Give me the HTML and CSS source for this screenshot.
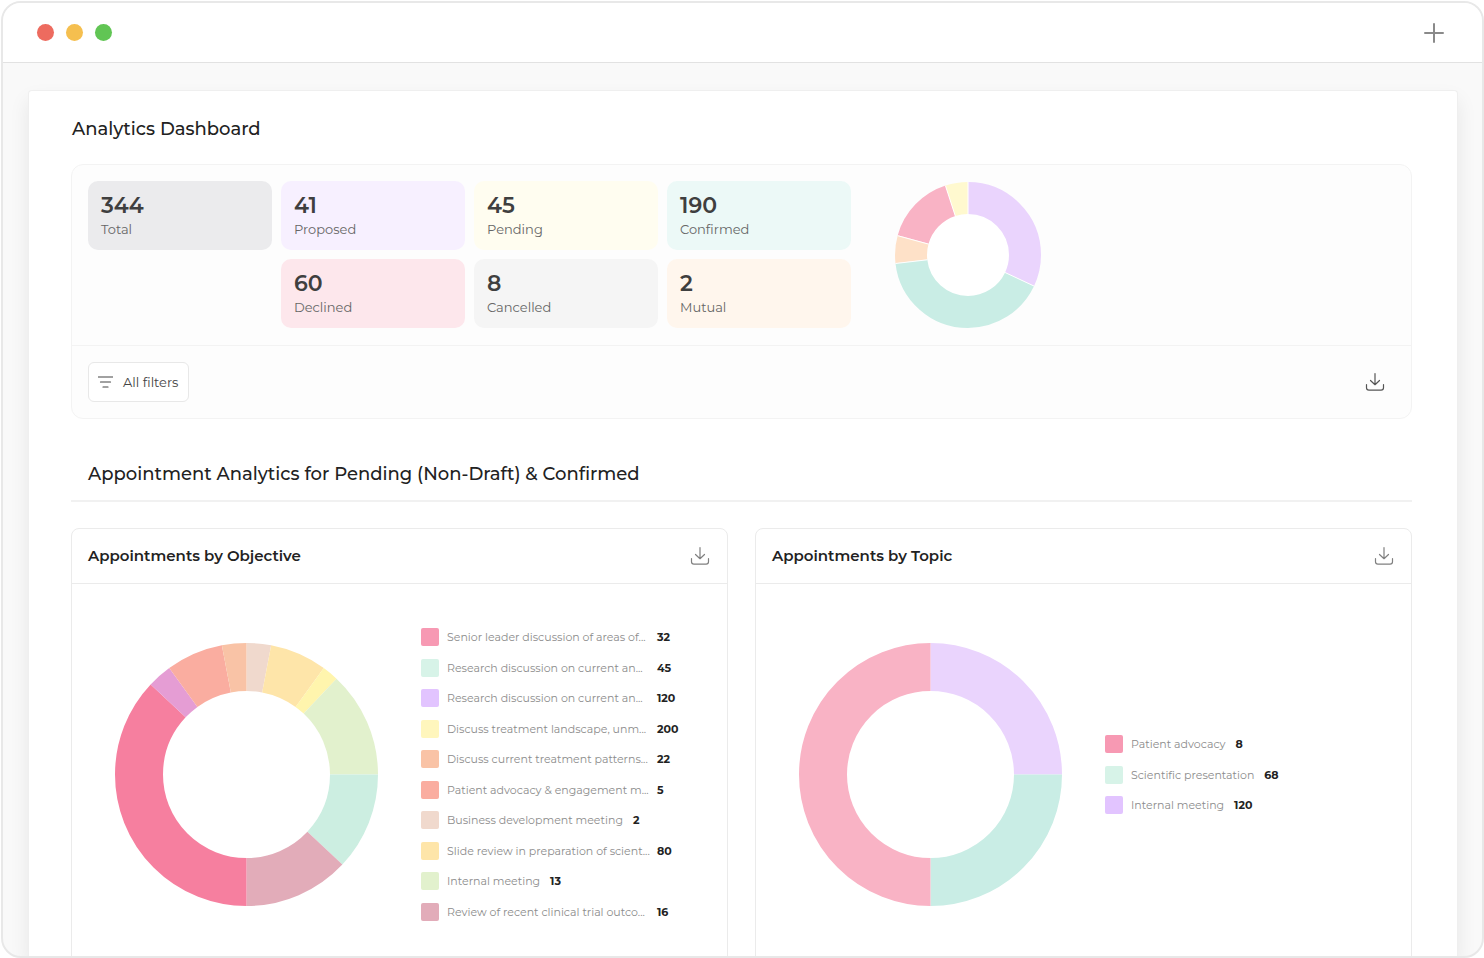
FILE: index.html
```
<!DOCTYPE html>
<html lang="en">
<head>
<meta charset="utf-8">
<meta name="viewport" content="width=device-width, initial-scale=1">
<title>Analytics Dashboard</title>
<link rel="stylesheet" href="styles.css">
</head>
<body>
<svg class="sprite" aria-hidden="true">
  <symbol id="download" viewBox="0 0 20 20">
    <path d="M10 1.500v11M5.500 8.500l4.500 4.200L14.500 8.500M1.500 12.500v3.300q0 2.400 2.400 2.400h12.200q2.400 0 2.400-2.400v-3.300" fill="none" stroke="currentColor" stroke-width="1.200" stroke-linecap="round" stroke-linejoin="round"/>
  </symbol>
</svg>
<div class="window">
  <header class="titlebar">
    <div class="lights">
      <span class="light light-red"></span>
      <span class="light light-amber"></span>
      <span class="light light-green"></span>
    </div>
    <button class="icon-button new-tab" type="button" aria-label="New tab">
      <svg width="20" height="20" viewBox="0 0 20 20"><path d="M10 1v18M1 10h18" stroke="currentColor" stroke-width="2" stroke-linecap="round"/></svg>
    </button>
  </header>
  <div class="viewport">
    <main class="panel">
      <h1 class="page-title">Analytics Dashboard</h1>

      <section class="summary">
        <div class="summary-main">
          <div class="stats">
            <div class="stat stat-total"><strong class="stat-value">344</strong><span class="stat-label">Total</span></div>
            <div class="stat stat-proposed"><strong class="stat-value">41</strong><span class="stat-label">Proposed</span></div>
            <div class="stat stat-pending"><strong class="stat-value">45</strong><span class="stat-label">Pending</span></div>
            <div class="stat stat-confirmed"><strong class="stat-value">190</strong><span class="stat-label">Confirmed</span></div>
            <div class="stat stat-declined"><strong class="stat-value">60</strong><span class="stat-label">Declined</span></div>
            <div class="stat stat-cancelled"><strong class="stat-value">8</strong><span class="stat-label">Cancelled</span></div>
            <div class="stat stat-mutual"><strong class="stat-value">2</strong><span class="stat-label">Mutual</span></div>
          </div>
          <svg class="donut-small" viewBox="0 0 146 146" role="img" aria-label="Appointments by status">
            <circle cx="73" cy="73" r="42" fill="#fff"/>
            <g fill="none" stroke-width="32" transform="rotate(-90 73 73)">
              <circle cx="73" cy="73" r="57" pathLength="100" stroke="#ead4fd" stroke-dasharray="32 100"/>
              <circle cx="73" cy="73" r="57" pathLength="100" stroke="#c9ede5" stroke-dasharray="41.200 100" stroke-dashoffset="-32"/>
              <circle cx="73" cy="73" r="57" pathLength="100" stroke="#fee1c8" stroke-dasharray="6.200 100" stroke-dashoffset="-73.200"/>
              <circle cx="73" cy="73" r="57" pathLength="100" stroke="#f9b3c5" stroke-dasharray="15.600 100" stroke-dashoffset="-79.400"/>
              <circle cx="73" cy="73" r="57" pathLength="100" stroke="#fff9cf" stroke-dasharray="5 100" stroke-dashoffset="-95"/>
            </g>
            <path d="M73 32V0M110.100 90.500L139.100 104.100M32.300 77.800L.5 81.500M33.500 62.100L2.600 53.700M60.300 34L50.400 3.600" stroke="#fff" stroke-width="1"/>
          </svg>
        </div>
        <div class="summary-tools">
          <button class="filter-button" type="button">
            <svg width="15" height="12" viewBox="0 0 15 12"><path d="M.5 1h14M2.500 6h10M5 11h5" stroke="currentColor" stroke-width="1.200" stroke-linecap="round"/></svg>
            All filters
          </button>
          <button class="icon-button" type="button" aria-label="Download summary"><svg width="20" height="20"><use href="#download"/></svg></button>
        </div>
      </section>

      <h2 class="section-title">Appointment Analytics for Pending (Non-Draft) &amp; Confirmed</h2>

      <div class="cards">
        <section class="card">
          <header class="card-header">
            <h3 class="card-title">Appointments by Objective</h3>
            <button class="icon-button icon-muted" type="button" aria-label="Download appointments by objective"><svg width="20" height="20"><use href="#download"/></svg></button>
          </header>
          <div class="card-body">
            <svg class="donut" viewBox="0 0 263 263" role="img" aria-label="Appointments by objective">
              <g fill="none" stroke-width="48" transform="rotate(-90 131.500 131.500)">
                <circle cx="131.500" cy="131.500" r="107.500" pathLength="100" stroke="#f0d9cd" stroke-dasharray="3 100"/>
                <circle cx="131.500" cy="131.500" r="107.500" pathLength="100" stroke="#fee5a9" stroke-dasharray="7 100" stroke-dashoffset="-3"/>
                <circle cx="131.500" cy="131.500" r="107.500" pathLength="100" stroke="#fff5ad" stroke-dasharray="2 100" stroke-dashoffset="-10"/>
                <circle cx="131.500" cy="131.500" r="107.500" pathLength="100" stroke="#e2f1cd" stroke-dasharray="13 100" stroke-dashoffset="-12"/>
                <circle cx="131.500" cy="131.500" r="107.500" pathLength="100" stroke="#cceee1" stroke-dasharray="12 100" stroke-dashoffset="-25"/>
                <circle cx="131.500" cy="131.500" r="107.500" pathLength="100" stroke="#e2acb9" stroke-dasharray="13 100" stroke-dashoffset="-37"/>
                <circle cx="131.500" cy="131.500" r="107.500" pathLength="100" stroke="#f67f9f" stroke-dasharray="37 100" stroke-dashoffset="-50"/>
                <circle cx="131.500" cy="131.500" r="107.500" pathLength="100" stroke="#e59dd4" stroke-dasharray="3 100" stroke-dashoffset="-87"/>
                <circle cx="131.500" cy="131.500" r="107.500" pathLength="100" stroke="#faada0" stroke-dasharray="7 100" stroke-dashoffset="-90"/>
                <circle cx="131.500" cy="131.500" r="107.500" pathLength="100" stroke="#f9c3a6" stroke-dasharray="3 100" stroke-dashoffset="-97"/>
              </g>
            </svg>
            <ul class="legend legend-long">
              <li class="legend-item"><span class="swatch rose"></span><span class="legend-name clipped">Senior leader discussion of areas of...</span><b class="legend-value">32</b></li>
              <li class="legend-item"><span class="swatch mint"></span><span class="legend-name clipped">Research discussion on current an...</span><b class="legend-value">45</b></li>
              <li class="legend-item"><span class="swatch lilac"></span><span class="legend-name clipped">Research discussion on current an...</span><b class="legend-value">120</b></li>
              <li class="legend-item"><span class="swatch lemon"></span><span class="legend-name clipped">Discuss treatment landscape, unm...</span><b class="legend-value">200</b></li>
              <li class="legend-item"><span class="swatch peach"></span><span class="legend-name clipped">Discuss current treatment patterns...</span><b class="legend-value">22</b></li>
              <li class="legend-item"><span class="swatch salmon"></span><span class="legend-name clipped">Patient advocacy &amp; engagement m...</span><b class="legend-value">5</b></li>
              <li class="legend-item"><span class="swatch sand"></span><span class="legend-name">Business development meeting</span><b class="legend-value">2</b></li>
              <li class="legend-item"><span class="swatch honey"></span><span class="legend-name clipped">Slide review in preparation of scient...</span><b class="legend-value">80</b></li>
              <li class="legend-item"><span class="swatch lime"></span><span class="legend-name">Internal meeting</span><b class="legend-value">13</b></li>
              <li class="legend-item"><span class="swatch mauve"></span><span class="legend-name clipped">Review of recent clinical trial outco...</span><b class="legend-value">16</b></li>
            </ul>
          </div>
        </section>

        <section class="card">
          <header class="card-header">
            <h3 class="card-title">Appointments by Topic</h3>
            <button class="icon-button icon-muted" type="button" aria-label="Download appointments by topic"><svg width="20" height="20"><use href="#download"/></svg></button>
          </header>
          <div class="card-body">
            <svg class="donut" viewBox="0 0 263 263" role="img" aria-label="Appointments by topic">
              <g fill="none" stroke-width="48" transform="rotate(-90 131.500 131.500)">
                <circle cx="131.500" cy="131.500" r="107.500" pathLength="100" stroke="#ead4fd" stroke-dasharray="25 100"/>
                <circle cx="131.500" cy="131.500" r="107.500" pathLength="100" stroke="#c9ede5" stroke-dasharray="25 100" stroke-dashoffset="-25"/>
                <circle cx="131.500" cy="131.500" r="107.500" pathLength="100" stroke="#f9b3c5" stroke-dasharray="50 100" stroke-dashoffset="-50"/>
              </g>
            </svg>
            <ul class="legend legend-short">
              <li class="legend-item"><span class="swatch rose"></span><span class="legend-name">Patient advocacy</span><b class="legend-value">8</b></li>
              <li class="legend-item"><span class="swatch mint"></span><span class="legend-name">Scientific presentation</span><b class="legend-value">68</b></li>
              <li class="legend-item"><span class="swatch lilac"></span><span class="legend-name">Internal meeting</span><b class="legend-value">120</b></li>
            </ul>
          </div>
        </section>
      </div>
    </main>
  </div>
</div>
</body>
</html>
```

FILE: styles.css
```
* { box-sizing: border-box; }

body {
  margin: 0;
  height: 100vh;
  padding: 1px 0 0 1px;
  overflow: hidden;
  background: #fff;
  color: #222;
  font-family: Montserrat, Inter, "Liberation Sans", sans-serif;
}

h1, h2, h3, ul { margin: 0; padding: 0; }
button { font: inherit; cursor: pointer; }
svg { display: block; flex: none; }
.sprite { position: absolute; width: 0; height: 0; }

.window {
  display: flex;
  flex-direction: column;
  height: 100%;
  border: 2px solid #e8e8e8;
  border-radius: 20px;
  overflow: hidden;
  background: #f9f9f9;
}

.titlebar {
  display: flex;
  flex: none;
  align-items: center;
  justify-content: space-between;
  height: 60px;
  padding: 0 38px 0 34px;
  border-bottom: 1px solid #e2e2e2;
  background: #fff;
}
.lights { display: flex; gap: 12px; }
.light { width: 17px; height: 17px; border-radius: 50%; }
.light-red { background: #ed6b5f; }
.light-amber { background: #f5bf4f; }
.light-green { background: #61c554; }

.icon-button {
  padding: 0;
  border: 0;
  background: none;
  color: #555;
}
.icon-muted { color: #808080; }
.new-tab { color: #8a8a8a; }

.viewport { flex: 1; min-height: 0; padding: 27px 24px 0 25px; }
.panel {
  height: 100%;
  padding: 24px 45px 0 42px;
  border: 1px solid #efefef;
  border-bottom: 0;
  border-radius: 4px 4px 0 0;
  background: #fff;
  box-shadow: 0 10px 20px rgba(0, 0, 0, 0.08);
}

.page-title {
  padding: 0 1px;
  font-size: 18px;
  font-weight: 500;
  line-height: 28px;
}

.summary {
  margin-top: 21px;
  border: 1px solid #f3f3f3;
  border-radius: 12px;
  background: #fdfdfd;
}
.summary-main {
  display: flex;
  align-items: center;
  gap: 44px;
  padding: 16px 16px 17px;
}
.stats {
  display: grid;
  grid-template-columns: repeat(4, 184px);
  gap: 9px;
}
.stat {
  display: flex;
  flex-direction: column;
  padding: 11px 13px 12px;
  border-radius: 10px;
}
.stat-value { color: #3f3f3f; font-size: 22px; font-weight: 600; line-height: 28px; }
.stat-label { color: #666; font-size: 13px; font-weight: 400; line-height: 18px; }
.stat-total { background: #ebebed; }
.stat-proposed { background: #f7f0ff; }
.stat-pending { background: #fffdf0; }
.stat-confirmed { background: #ecf9f7; }
.stat-declined { grid-column: 2; background: #fde7ec; }
.stat-cancelled { background: #f5f5f5; }
.stat-mutual { background: #fff6ed; }
.donut-small { width: 146px; height: 146px; }

.summary-tools {
  display: flex;
  align-items: center;
  justify-content: space-between;
  padding: 16px 26px 16px 16px;
  border-top: 1px solid #f3f3f3;
}
.filter-button {
  display: flex;
  align-items: center;
  gap: 10px;
  height: 40px;
  padding: 0 10px 0 9px;
  border: 1px solid #e8e8e8;
  border-radius: 6px;
  background: #fff;
  color: #444;
  font-size: 13px;
}

.section-title {
  margin-top: 41px;
  padding: 0 17px 12px;
  border-bottom: 2px solid #f1f1f1;
  font-size: 18px;
  font-weight: 500;
  line-height: 28px;
}

.cards {
  display: grid;
  grid-template-columns: 1fr 1fr;
  gap: 27px;
  margin-top: 26px;
}
.card {
  display: flex;
  flex-direction: column;
  border: 1px solid #ebebeb;
  border-radius: 8px;
}
.card-header {
  display: flex;
  align-items: center;
  justify-content: space-between;
  height: 55px;
  padding: 0 17px 0 16px;
  border-bottom: 1px solid #ebebeb;
}
.card-title { font-size: 15px; font-weight: 600; line-height: 20px; }
.card-body {
  display: flex;
  flex: 1;
  align-items: center;
  gap: 43px;
  padding: 44px 43px;
}
.donut { width: 263px; height: 263px; }

.legend {
  display: flex;
  flex-direction: column;
  justify-content: space-between;
  list-style: none;
}
.legend-long { min-height: 293px; }
.legend-short { min-height: 79px; }
.legend-item {
  display: flex;
  align-items: center;
  height: 18px;
  font-size: 11px;
  line-height: 18px;
  white-space: nowrap;
}
.swatch { width: 18px; height: 18px; margin-right: 8px; border-radius: 2px; }
.legend-name { margin-right: 10px; color: #8c8c8c; font-weight: 400; }
.clipped { width: 200px; }
.legend-value { color: #222; font-weight: 700; }

.rose { background: #f799b3; }
.mint { background: #d7f3e8; }
.lilac { background: #e2c4ff; }
.lemon { background: #fff6bd; }
.peach { background: #f9c3a6; }
.salmon { background: #faada0; }
.sand { background: #f0d9cd; }
.honey { background: #fee5a9; }
.lime { background: #e2f1cd; }
.mauve { background: #e2acb9; }
```
